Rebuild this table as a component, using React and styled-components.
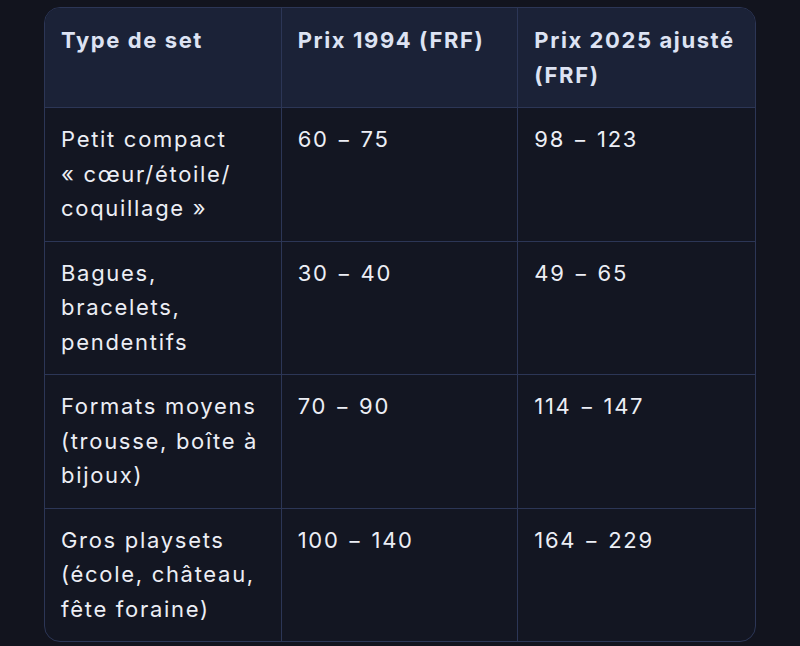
import React from 'react';
import styled, { createGlobalStyle } from 'styled-components';

const rows = [
  ['Petit compact «\u00a0cœur/étoile/ coquillage\u00a0»', '60 − 75', '98 − 123'],
  ['Bagues, bracelets, pendentifs', '30 − 40', '49 − 65'],
  ['Formats moyens (trousse, boîte à bijoux)', '70 − 90', '114 − 147'],
  ['Gros playsets (école, château, fête foraine)', '100 − 140', '164 − 229'],
];

const App = () => {
  return <Page>
    <Wrapper>
      <Table>
        <thead>
          <tr>
            <Th>Type de set</Th>
            <Th>Prix 1994 (FRF)</Th>
            <Th last>Prix 2025 ajusté (FRF)</Th>
          </tr>
        </thead>
        <tbody>
          {rows.map((r, i) => <tr key={i}>
            {r.map((c, j) => <Td key={j} last={j === 2} bottom={i === rows.length - 1}>{c}</Td>)}
          </tr>)}
        </tbody>
      </Table>
    </Wrapper>
  </Page>
}

const GlobalStyle = createGlobalStyle`
  body {
    margin: 0;
    background: #12141e;
  }
`;

const Page = styled.div`
  min-height: 646px;
  padding: 7px 44px;
  box-sizing: border-box;
  font-family: Inter, sans-serif;
`;

const Wrapper = styled.div`
  border: 1px solid #2c3656;
  border-radius: 16px;
  overflow: hidden;
  background: #131622;
`;

const Table = styled.table`
  width: 100%;
  border-collapse: separate;
  border-spacing: 0;
  table-layout: fixed;
`;

const Th = styled.th`
  text-align: left;
  vertical-align: top;
  background: #1b2237;
  color: #dde3f3;
  font-weight: 700;
  font-size: 22px;
  letter-spacing: 1.6px;
  line-height: 34.5px;
  padding: 15px 16px 15px;
  border-bottom: 1px solid #2c3656;
  border-right: ${p => p.last ? 'none' : '1px solid #2c3656'};
`;

const Td = styled.td`
  vertical-align: top;
  color: #eceef5;
  font-size: 22px;
  letter-spacing: 1.7px;
  line-height: 34.5px;
  height: 103.5px;
  padding: 14px 16px 15px;
  border-bottom: ${p => p.bottom ? 'none' : '1px solid #2c3656'};
  border-right: ${p => p.last ? 'none' : '1px solid #2c3656'};
`;

export default function Root() {
  return <>
    <GlobalStyle />
    <App />
  </>
}
